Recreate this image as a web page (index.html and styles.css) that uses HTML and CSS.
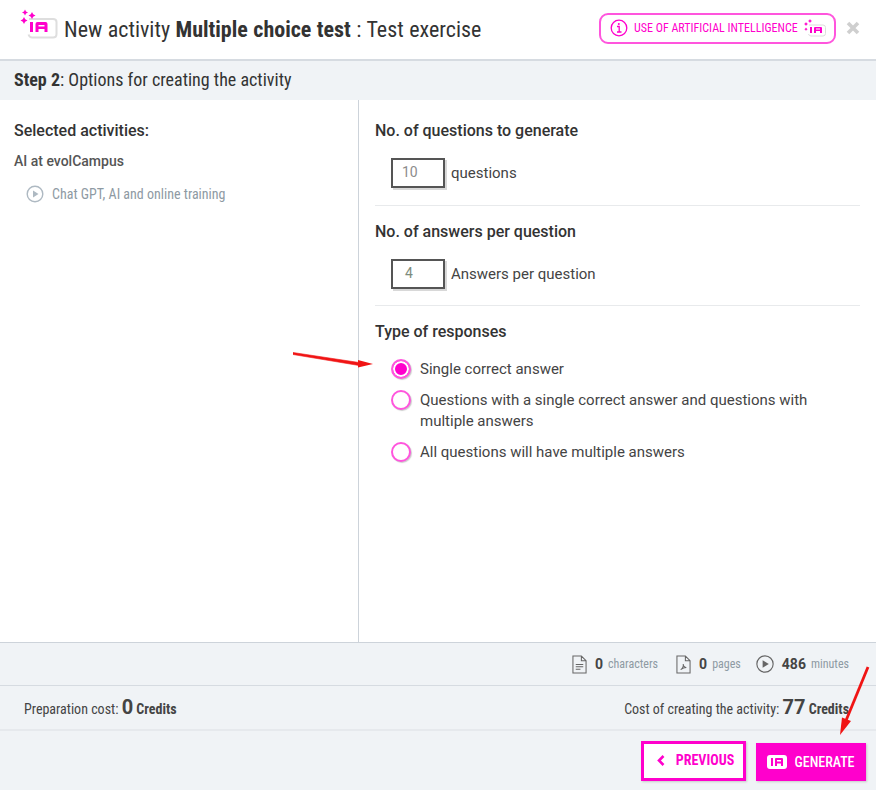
FILE: index.html
```html
<!DOCTYPE html>
<html>
  <head>
    <meta charset="utf-8" />
    <title>New activity</title>
    <link rel="stylesheet" href="styles.css">
  </head>
  <body>
    <div class="dialog">
      <header class="top">
        <svg class="ia-logo" width="38" height="32" viewBox="0 0 38 32">
          <path d="M9 10h24q3.500 0 3.500 3v12q0 3.500-3.500 3.500H12q-2.500 0-3.500-3" fill="#fff" stroke="#dedede" stroke-width="2"/>
          <path d="M5 .5l1 2 2 1-2 1-1 2-1-2-2-1 2-1zM12 3l1.200 2.300 2.300 1.200-2.300 1.200L12 10l-1.200-2.300-2.300-1.200 2.300-1.200zM4 8l1.200 2.300 2.300 1.200-2.300 1.200L4 15l-1.200-2.300-2.300-1.200 2.300-1.200z" fill="#ff00cc"/>
          <path d="M10 13h3v10h-3zM15.500 23v-8q0-2 2-2h8q2 0 2 2v8h-3v-3h-6v3zM18.500 17.500h6V16h-6z" fill="#ff00cc"/>
        </svg>
        <h1 class="title">New activity <b>Multiple choice test</b> : Test exercise</h1>
        <div class="ai-pill">
          <svg class="pill-icon" width="18" height="18" viewBox="0 0 18 18" fill="none" stroke="#ff00cc">
            <circle cx="9" cy="9" r="7.800" stroke-width="1.300"/>
            <path d="M7 7.500h2.200v5M7 13h4.500" stroke-width="1.300"/>
            <circle cx="8.800" cy="4.900" r="1" fill="#ff00cc" stroke="none"/>
          </svg>
          <span class="ai-text">USE OF ARTIFICIAL INTELLIGENCE</span>
          <svg class="pill-icon" width="22" height="18" viewBox="0 0 22 18">
            <path d="M5 6h14q2.500 0 2.500 2.500v6q0 2.500-2.500 2.500H7q-2 0-2.500-2" fill="#fff" stroke="#dcdcdc"/>
            <path d="M2 3l.7 1.300 1.300.7-1.300.7L2 7l-.7-1.300L0 5l1.300-.7zM6 0l.7 1.300 1.300.7-1.300.7L6 4l-.7-1.300L4 2l1.300-.7zM2 8.500l.6 1.100 1.100.6-1.100.6-.6 1.100-.6-1.100-1.100-.6 1.100-.6z" fill="#ff00cc"/>
            <path d="M6 8h2v6H6zM10 14V9q0-1 1-1h6q1 0 1 1v5h-2v-2h-4v2zM12 10.500h4V9.500h-4z" fill="#ff00cc"/>
          </svg>
        </div>
        <svg class="close" width="14" height="14" viewBox="0 0 14 14">
          <path d="M2 2l10 10M12 2L2 12" stroke="#cfcfcf" stroke-width="3.600"/>
        </svg>
      </header>

      <div class="step"><b>Step 2</b>: Options for creating the activity</div>

      <main class="body">
        <aside class="left">
          <h2 class="left-title">Selected activities:</h2>
          <div class="course">AI at evolCampus</div>
          <div class="lesson">
            <svg width="18" height="18" viewBox="0 0 18 18">
              <circle cx="9" cy="9" r="7.800" fill="none" stroke="#aeb9c2" stroke-width="1.400"/>
              <path d="M7 5.500l5.500 3.500L7 12.500z" fill="#aeb9c2"/>
            </svg>
            <span>Chat GPT, AI and online training</span>
          </div>
        </aside>
        <section class="right">
          <div class="block first">
            <h3>No. of questions to generate</h3>
            <div class="field"><span class="num">10</span><span>questions</span></div>
          </div>
          <div class="block">
            <h3>No. of answers per question</h3>
            <div class="field"><span class="num num-one">4</span><span>Answers per question</span></div>
          </div>
          <div class="block last">
            <h3>Type of responses</h3>
            <div class="radios">
              <div class="radio on"><i></i><span>Single correct answer</span></div>
              <div class="radio"><i></i><span>Questions with a single correct answer and questions with multiple answers</span></div>
              <div class="radio"><i></i><span>All questions will have multiple answers</span></div>
            </div>
          </div>
        </section>
      </main>

      <div class="stats">
        <div class="stat stat-chars">
          <svg width="15" height="19" viewBox="0 0 16 20" fill="none" stroke="#666" stroke-width="1.100">
            <path d="M1 1h9l5 5v13H1zM10 1v5h5M4 10h8M4 12.500h8M4 15h5"/>
          </svg>
          <b>0</b><span>characters</span>
        </div>
        <div class="stat">
          <svg width="15" height="19" viewBox="0 0 16 20" fill="none" stroke="#666" stroke-width="1.100">
            <path d="M1 1h9l5 5v13H1zM10 1v5h5M5 15.500c2-1 3-4 2.700-6 0 2 1.300 3.500 3.300 3.800-2 0-4 .7-6 2.200z"/>
          </svg>
          <b>0</b><span>pages</span>
        </div>
        <div class="stat">
          <svg width="18" height="18" viewBox="0 0 19 19">
            <circle cx="9.500" cy="9.500" r="8.600" fill="none" stroke="#666" stroke-width="1.200"/>
            <path d="M7 5.500l6.500 4-6.500 4z" fill="#666"/>
          </svg>
          <b>486</b><span>minutes</span>
        </div>
      </div>

      <div class="costs">
        <div>Preparation cost: <b class="big">0</b> <b>Credits</b></div>
        <div>Cost of creating the activity: <b class="big">77</b> <b>Credits</b></div>
      </div>

      <footer class="actions">
        <button class="btn prev">
          <svg width="8" height="11" viewBox="0 0 8 11" fill="none" stroke="#ff00cc" stroke-width="2.600"><path d="M6.500 1L2 5.500l4.500 4.500"/></svg>
          PREVIOUS
        </button>
        <button class="btn gen">
          <svg width="20" height="14" viewBox="0 0 20 14">
            <path d="M3 0h14q3 0 3 3v8q0 3-3 3H3q-3 0-3-3V3q0-3 3-3z" fill="#fff"/>
            <path d="M4 3h2v8H4zM8 11V4q0-1 1-1h6q1 0 1 1v7h-2V8.500h-4V11zM10 6.500h4V5h-4z" fill="#ff00cc"/>
          </svg>
          GENERATE
        </button>
      </footer>

      <svg class="arrow arrow-one" width="82" height="24" viewBox="0 0 82 24">
        <path d="M0 3.500L66 13.500V16.500L0 5.500z" fill="#f01414" stroke="#f01414" stroke-width=".6"/>
        <path d="M80 15L65 11v7.500z" fill="#f01414"/>
      </svg>
      <svg class="arrow arrow-two" width="34" height="72" viewBox="0 0 34 72">
        <path d="M31 2L8 58" stroke="#f01414" stroke-width="2.800"/>
        <path d="M3 70l11-14-9-3.500z" fill="#f01414"/>
      </svg>
    </div>
  </body>
</html>
```
FILE: styles.css
```css
html, body {
  margin: 0;
  padding: 0;
  background: #fff;
}

.dialog {
  position: relative;
  width: 876px;
  height: 790px;
  display: flex;
  flex-direction: column;
  font-family: Roboto, "Liberation Sans", sans-serif;
  color: #444;
  overflow: hidden;
}

.top {
  height: 61px;
  flex: none;
  display: flex;
  align-items: center;
  padding: 0 16px 0 20px;
  box-sizing: border-box;
  border-bottom: 2px solid #d6dbe1;
}
.ia-logo {
  flex: none;
  margin: -9px 6px 0 0;
}
.title {
  flex: 1;
  margin: 0;
  font-size: 22px;
  font-weight: 400;
  font-stretch: 75%;
  color: #333;
  white-space: nowrap;
  word-spacing: 0.4px;
}
.title b {
  font-weight: 700;
}
.ai-pill {
  display: flex;
  align-items: center;
  gap: 6px;
  height: 31px;
  width: 237px;
  box-sizing: border-box;
  padding: 0 9px;
  margin-top: -3px;
  border: 2px solid #ff55dd;
  border-radius: 9px;
  color: #ff00cc;
}
.pill-icon {
  flex: none;
}
.ai-text {
  font-size: 12px;
  font-stretch: 75%;
  white-space: nowrap;
}
.close {
  margin: -3px 0 0 10px;
}

.step {
  height: 39px;
  flex: none;
  line-height: 38px;
  padding-left: 14px;
  background: #f0f3f6;
  font-size: 18px;
  font-stretch: 75%;
  color: #333;
}

.body {
  flex: 1;
  display: flex;
  min-height: 0;
}
.left {
  width: 359px;
  flex: none;
  box-sizing: border-box;
  padding: 21px 14px;
  border-right: 1px solid #cdd3da;
}
.left-title {
  margin: 0;
  font-size: 16px;
  line-height: 20px;
  font-weight: 500;
  color: #333;
}
.course {
  margin-top: 11px;
  font-size: 14px;
  line-height: 18px;
  font-weight: 500;
  color: #555;
}
.lesson {
  display: flex;
  align-items: center;
  gap: 8px;
  margin: 15px 0 0 12px;
  font-size: 14px;
  font-stretch: 75%;
  color: #8e9aa3;
}

.right {
  flex: 1;
  padding: 0 16px;
  min-width: 0;
}
.block {
  padding: 16px 0;
  border-bottom: 1px solid #e8eaec;
}
.block.first {
  padding: 21px 0 17px;
}
.block.last {
  border-bottom: 0;
}
.block h3 {
  margin: 0;
  font-size: 16px;
  line-height: 20px;
  font-weight: 500;
  color: #333;
}
.field {
  display: flex;
  align-items: center;
  gap: 6px;
  margin: 17px 0 0 16px;
  font-size: 15px;
  color: #444;
}
.num {
  width: 54px;
  height: 30px;
  box-sizing: border-box;
  border: 2px solid #555;
  box-shadow: 2px 2px 0 #d8d8d8;
  padding-left: 9px;
  line-height: 24px;
  font-size: 14px;
  color: #8c8c8c;
}
.num-one {
  padding-left: 12px;
  color: #7d8c7d;
}

.radios {
  display: flex;
  flex-direction: column;
  gap: 10px;
  margin: 17px 0 0 16px;
}
.radio {
  display: flex;
  gap: 9px;
  font-size: 15px;
  line-height: 21px;
  color: #444;
}
.radio i {
  flex: none;
  width: 20px;
  height: 20px;
  box-sizing: border-box;
  border: 2px solid #ff55dd;
  border-radius: 50%;
  background: #fff;
  box-shadow: 1px 1px 1px #ccc;
}
.radio.on i {
  background: #ff00cc;
  box-shadow: inset 0 0 0 2px #fff, 1px 1px 1px #ccc;
}

.stats {
  flex: none;
  height: 44px;
  box-sizing: border-box;
  display: flex;
  justify-content: flex-end;
  align-items: center;
  gap: 15px;
  padding-right: 27px;
  background: #f0f3f6;
  border-top: 1px solid #cdd3da;
  border-bottom: 1px solid #d6dbe1;
}
.stat {
  display: flex;
  align-items: center;
  gap: 8px;
  font-size: 14px;
}
.stat-chars {
  margin-right: 3px;
}
.stat b {
  color: #444;
}
.stat span {
  font-size: 12px;
  font-stretch: 75%;
  color: #8e9aa3;
  margin-left: -3px;
}

.costs {
  flex: none;
  height: 45px;
  box-sizing: border-box;
  display: flex;
  justify-content: space-between;
  align-items: center;
  padding: 0 27px 2px 24px;
  background: #f0f3f6;
  border-bottom: 2px solid #e6e9ed;
  font-size: 14px;
  font-stretch: 75%;
  color: #444;
}
.costs .big {
  font-size: 20px;
  font-stretch: 100%;
}

.actions {
  flex: none;
  height: 59px;
  box-sizing: border-box;
  display: flex;
  justify-content: flex-end;
  align-items: flex-end;
  gap: 10px;
  padding: 0 10px 9px 0;
  background: #f0f3f6;
}
.btn {
  box-sizing: border-box;
  display: flex;
  align-items: center;
  justify-content: center;
  gap: 8px;
  padding: 0;
  font-family: inherit;
  font-size: 14px;
  font-stretch: 75%;
  box-shadow: 1px 1px 2px #c9c9c9;
}
.prev {
  width: 105px;
  height: 40px;
  gap: 11px;
  padding: 0 0 2px 4px;
  font-weight: 700;
  background: #fff;
  border: 3px solid #ff00cc;
  color: #ff00cc;
}
.gen {
  width: 110px;
  height: 38px;
  gap: 7px;
  padding-bottom: 1px;
  font-weight: 500;
  background: #ff00cc;
  border: 0;
  color: #fff;
}

.arrow {
  position: absolute;
}
.arrow-one {
  left: 293px;
  top: 349px;
}
.arrow-two {
  left: 837px;
  top: 665px;
}
```
